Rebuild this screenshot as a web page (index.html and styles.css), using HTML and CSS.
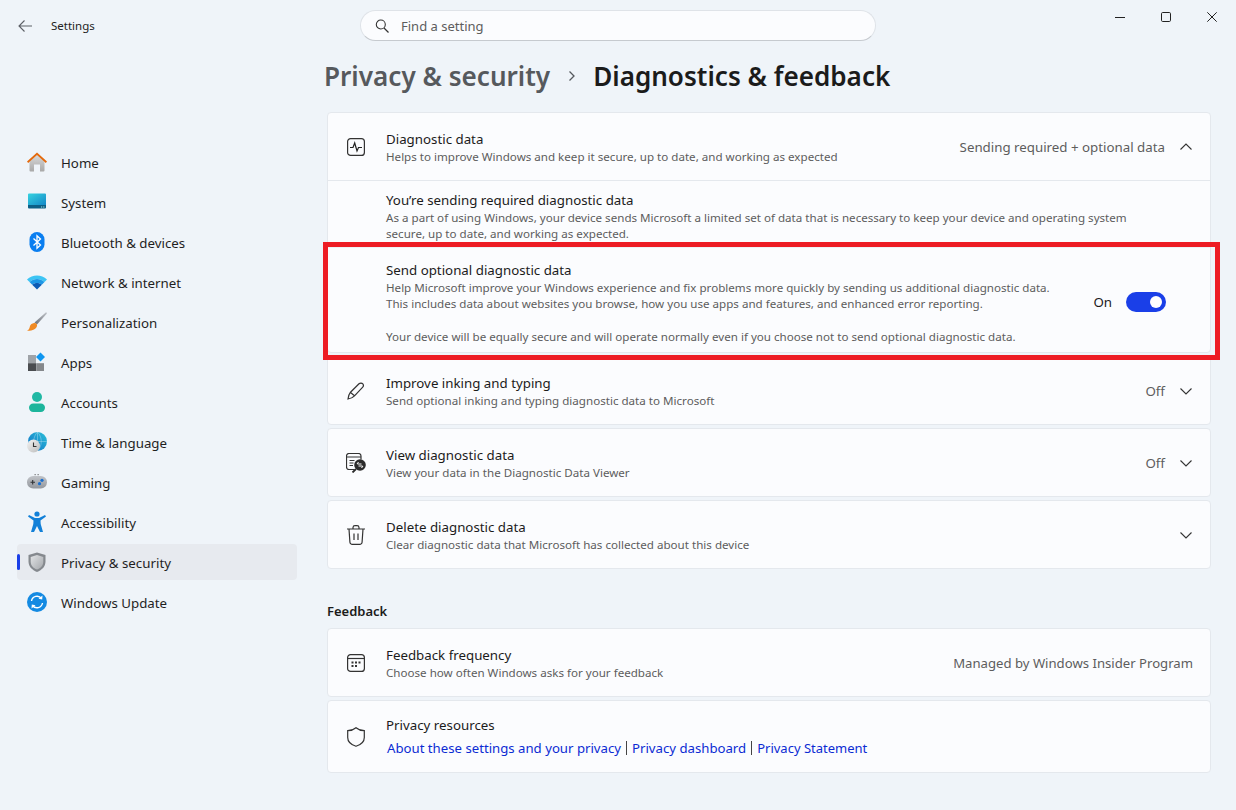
FILE: index.html
```html
<!DOCTYPE html>
<html lang="en">
<head>
<meta charset="utf-8">
<title>Settings</title>
<link rel="stylesheet" href="styles.css">
</head>
<body>
<div class="app">
  <header class="titlebar">
    <div class="tb-left">
      <svg class="back" width="16" height="16" viewBox="0 0 16 16"><path d="M15 8H2M7.500 2.500 2 8l5.500 5.500" fill="none" stroke="#5c6066" stroke-width="1.100"/></svg>
      <span class="app-name">Settings</span>
    </div>
    <div class="search">
      <svg width="16" height="16" viewBox="0 0 16 16"><circle cx="6.800" cy="6.500" r="4.500" fill="none" stroke="#333" stroke-width="1.100"/><path d="m10 10 4.500 4.500" stroke="#333" stroke-width="1.200"/></svg>
      <span>Find a setting</span>
    </div>
    <div class="controls">
      <svg width="10" height="10" viewBox="0 0 10 10"><path d="M0 5.500h10" stroke="#222" stroke-width="1"/></svg>
      <svg width="10" height="10" viewBox="0 0 10 10"><rect x=".5" y=".5" width="9" height="9" rx="1.200" fill="none" stroke="#222"/></svg>
      <svg width="10" height="10" viewBox="0 0 10 10"><path d="m.3.300 9.400 9.400M9.700.300.3 9.700" stroke="#222" stroke-width="1"/></svg>
    </div>
  </header>
  <div class="body">
    <nav class="nav">
      <a class="nav-item"><svg class="nav-icon" viewBox="0 0 22 22"><defs><linearGradient id="hw" x1="0" y1="0" x2="0" y2="1"><stop offset="0" stop-color="#dcdcdc"/><stop offset="1" stop-color="#a8a8a8"/></linearGradient></defs><path d="M3.500 10 11 3l7.500 7v9.500a1 1 0 0 1-1 1H14v-7H8v7H4.500a1 1 0 0 1-1-1z" fill="url(#hw)"/><path d="M1 10.500 11 1.500l10 9-1.200 1.400L11 4 2.200 11.900z" fill="#e4690c"/></svg><span>Home</span></a>
      <a class="nav-item"><svg class="nav-icon" viewBox="0 0 22 22"><defs><linearGradient id="sy" x1="0" y1="0" x2="1" y2="1"><stop offset="0" stop-color="#36d3e0"/><stop offset="1" stop-color="#1488c8"/></linearGradient></defs><path d="M2 3.500a1 1 0 0 1 1-1h16a1 1 0 0 1 1 1V14H2z" fill="url(#sy)"/><path d="M2 14h18v2.500a1 1 0 0 1-1 1H3a1 1 0 0 1-1-1z" fill="#0c5f86"/><path d="M15 16h1.200M17.200 16h1.200" stroke="#cfe" stroke-width=".8"/></svg><span>System</span></a>
      <a class="nav-item"><svg class="nav-icon" viewBox="0 0 22 22"><rect x="3.500" y="1" width="15" height="20" rx="7.500" fill="#0a7ef0"/><path d="m7.500 7.500 7 6.500-3.500 3.200V4.800L14.500 8l-7 6.500" fill="none" stroke="#fff" stroke-width="1.300"/></svg><span>Bluetooth &amp; devices</span></a>
      <a class="nav-item"><svg class="nav-icon" viewBox="0 0 22 22"><path d="M1 8.500C6.500 3 15.500 3 21 8.500l-2.500 2.500C14 7 8 7 3.500 11z" fill="#3cc4f4"/><path d="M3.500 11C8 7 14 7 18.500 11l-2.700 2.700C13 11.300 9 11.300 6.200 13.700z" fill="#1d97e6"/><path d="M6.200 13.700c2.800-2.400 6.800-2.400 9.600 0L11 18.500z" fill="#0c5bb5"/></svg><span>Network &amp; internet</span></a>
      <a class="nav-item"><svg class="nav-icon" viewBox="0 0 22 22"><defs><linearGradient id="br" x1="0" y1="1" x2="1" y2="0"><stop offset="0" stop-color="#6c7078"/><stop offset="1" stop-color="#bfc3c9"/></linearGradient></defs><path d="M20 1.200c.8.300 1 1 .7 1.600L11 13.500 8.500 11.500z" fill="url(#br)"/><path d="M8 12c2-.5 3.500 1 3 3-.7 3-4.500 5-10 4.800 2.500-1.500 2.500-3 3-4.800.4-1.500 2.200-2.600 4-3z" fill="#f08a24"/></svg><span>Personalization</span></a>
      <a class="nav-item"><svg class="nav-icon" viewBox="0 0 22 22"><rect x="2" y="4" width="8" height="8" fill="#9fa3a8"/><rect x="2" y="12.200" width="8" height="7.800" fill="#4a4c50"/><rect x="10.200" y="12.200" width="7.800" height="7.800" fill="#85888c"/><path d="m14.500 1.500 4.500 4.500-4.500 4.500L10 6z" fill="#0f96f0"/></svg><span>Apps</span></a>
      <a class="nav-item"><svg class="nav-icon" viewBox="0 0 22 22"><circle cx="11" cy="6" r="5" fill="#20b8a4"/><rect x="3" y="12.500" width="16" height="8.500" rx="4.200" fill="#1cb59c"/></svg><span>Accounts</span></a>
      <a class="nav-item"><svg class="nav-icon" viewBox="0 0 22 22"><defs><linearGradient id="gl" x1="1" y1="0" x2="0" y2="1"><stop offset="0" stop-color="#2bc0d8"/><stop offset="1" stop-color="#0f6fc6"/></linearGradient><linearGradient id="cl" x1="0" y1="0" x2="1" y2="1"><stop offset="0" stop-color="#f4f4f4"/><stop offset="1" stop-color="#bcbcbc"/></linearGradient></defs><circle cx="11.500" cy="10.500" r="9.500" fill="url(#gl)"/><path d="M11.500 1v19M2 10.500h19M11.500 1c-5 5-5 14 0 19M11.500 1c5 5 5 14 0 19" fill="none" stroke="#bfe6f5" stroke-width=".4"/><circle cx="7.500" cy="15" r="6.500" fill="url(#cl)"/><path d="M7.500 11.500v4h3" fill="none" stroke="#333" stroke-width="1.100"/></svg><span>Time &amp; language</span></a>
      <a class="nav-item"><svg class="nav-icon" viewBox="0 0 22 22"><defs><linearGradient id="gp" x1="0" y1="0" x2="0" y2="1"><stop offset="0" stop-color="#c0c3c8"/><stop offset="1" stop-color="#94989e"/></linearGradient></defs><rect x="1" y="5" width="20" height="12.500" rx="6.200" fill="url(#gp)"/><path d="M4.500 11.200h4.500M6.700 9v4.500" stroke="#2f3236" stroke-width="1.100"/><circle cx="16" cy="9.300" r="1.600" fill="#1a70d0"/><circle cx="13.500" cy="12.700" r="1.600" fill="#1a70d0"/><path d="M8.500 3.700h1.300M11.500 3.700h1.300" stroke="#555" stroke-width=".9"/></svg><span>Gaming</span></a>
      <a class="nav-item"><svg class="nav-icon" viewBox="0 0 22 22"><circle cx="11" cy="3" r="2.600" fill="#1280d8"/><path d="M2 5.500 3 4l6 3h4l6-3 1 1.500-5.500 4 .2 3.500L17 21h-3l-3-6-3 6H5l2.300-8 .2-3.500z" fill="#1280d8"/></svg><span>Accessibility</span></a>
      <a class="nav-item active"><svg class="nav-icon" viewBox="0 0 22 22"><defs><linearGradient id="sh" x1="0" y1="0" x2="1" y2="1"><stop offset="0" stop-color="#e2e4e6"/><stop offset="1" stop-color="#a4a7ab"/></linearGradient></defs><path d="M11 1.500 19.500 4v6.500c0 5-3.500 8.500-8.500 10.500-5-2-8.500-5.500-8.500-10.500V4z" fill="#85898e"/><path d="M11 4 17.300 6v4.700c0 3.800-2.500 6.300-6.300 7.900-3.800-1.600-6.300-4.100-6.300-7.900V6z" fill="url(#sh)"/></svg><span>Privacy &amp; security</span></a>
      <a class="nav-item"><svg class="nav-icon" viewBox="0 0 22 22"><circle cx="11" cy="11" r="10" fill="#148ae2"/><path d="M5.500 10a5.600 5.600 0 0 1 10-2.500M16.500 12a5.600 5.600 0 0 1-10 2.500" fill="none" stroke="#fff" stroke-width="1.400"/><path d="m16.500 4.500-.3 4-3.700-.7zM5.500 17.500l.3-4 3.700.7z" fill="#fff"/></svg><span>Windows Update</span></a>
    </nav>
    <main class="main">
      <h1 class="crumbs"><span class="crumb-parent">Privacy &amp; security</span><svg class="crumb-sep" width="10" height="12" viewBox="0 0 10 12"><path d="m2.500 1.500 4.500 4.500-4.500 4.500" fill="none" stroke="#55595e" stroke-width="1.300"/></svg><span>Diagnostics &amp; feedback</span></h1>

      <section class="card expanded">
        <div class="row head">
          <svg class="icon" viewBox="0 0 18 18"><rect x=".6" y=".6" width="16.800" height="16.800" rx="3" fill="none" stroke="#333" stroke-width="1.200"/><path d="M3 9.500h3l1.700-4.500 2.300 8 1.500-3.500h3.500" fill="none" stroke="#222" stroke-width="1.200"/></svg>
          <div class="text"><div class="t">Diagnostic data</div><div class="s">Helps to improve Windows and keep it secure, up to date, and working as expected</div></div>
          <span class="status">Sending required + optional data</span>
          <svg class="chev" viewBox="0 0 12 12"><path d="m.5 8.500 5.500-5.500 5.500 5.500" fill="none" stroke="#333" stroke-width="1.100"/></svg>
        </div>
        <div class="sub sub-required">
          <div class="t">You’re sending required diagnostic data</div>
          <div class="s">As a part of using Windows, your device sends Microsoft a limited set of data that is necessary to keep your device and operating system<br>secure, up to date, and working as expected.</div>
        </div>
        <div class="sub sub-optional">
          <div class="text">
            <div class="t">Send optional diagnostic data</div>
            <div class="s">Help Microsoft improve your Windows experience and fix problems more quickly by sending us additional diagnostic data.<br>This includes data about websites you browse, how you use apps and features, and enhanced error reporting.<br><br>Your device will be equally secure and will operate normally even if you choose not to send optional diagnostic data.</div>
          </div>
          <span class="on">On</span>
          <span class="toggle"><span class="knob"></span></span>
        </div>
      </section>

      <section class="card row collapsed">
        <svg class="icon" viewBox="0 0 18 18"><path d="M1 17c.5-3 1-5 2.500-6.800L12 1.800c1-1 3-1 3.800 0 .8 1 .7 2.500-.3 3.500L7.500 13.800C5.800 15.500 4 16.500 1 17zM3.500 10.500l4 3.300" fill="none" stroke="#333" stroke-width="1.200"/></svg>
        <div class="text"><div class="t">Improve inking and typing</div><div class="s">Send optional inking and typing diagnostic data to Microsoft</div></div>
        <span class="status">Off</span>
        <svg class="chev" viewBox="0 0 12 12"><path d="m.5 3.500 5.500 5.500 5.500-5.500" fill="none" stroke="#333" stroke-width="1.100"/></svg>
      </section>
      <section class="card row collapsed">
        <svg class="icon icon-wide" viewBox="0 0 20 20"><path d="M8.500 16.500H3a2.500 2.500 0 0 1-2.500-2.500V3A2.500 2.500 0 0 1 3 .5h9.500A2.500 2.500 0 0 1 15 3v3.500M.5 4h14.500M3.500 7.500h5M3.500 10h4M3.500 12.500h3.500" fill="none" stroke="#333" stroke-width="1.200"/><circle cx="14" cy="12" r="5.800" fill="#2b2b2b"/><path d="M11.500 11h4M16.500 13h-4M12.500 9 11 11M15.500 15l1.500-2" stroke="#fff" stroke-width="1" fill="none"/><path d="m10 16-3.500 3.500" stroke="#2b2b2b" stroke-width="1.800"/></svg>
        <div class="text"><div class="t">View diagnostic data</div><div class="s">View your data in the Diagnostic Data Viewer</div></div>
        <span class="status">Off</span>
        <svg class="chev" viewBox="0 0 12 12"><path d="m.5 3.500 5.500 5.500 5.500-5.500" fill="none" stroke="#333" stroke-width="1.100"/></svg>
      </section>
      <section class="card row collapsed">
        <svg class="icon icon-tall" viewBox="0 0 18 20"><path d="M0 4h18M6 4V2.500A2 2 0 0 1 8 .6h2a2 2 0 0 1 2 1.900V4M2 4l.9 13a2.400 2.400 0 0 0 2.400 2.400h7.400a2.400 2.400 0 0 0 2.400-2.400L16 4M7 8.500v6.500M11 8.500v6.500" fill="none" stroke="#333" stroke-width="1.200"/></svg>
        <div class="text"><div class="t">Delete diagnostic data</div><div class="s">Clear diagnostic data that Microsoft has collected about this device</div></div>
        <svg class="chev" viewBox="0 0 12 12"><path d="m.5 3.500 5.500 5.500 5.500-5.500" fill="none" stroke="#333" stroke-width="1.100"/></svg>
      </section>

      <h2 class="section-title">Feedback</h2>

      <section class="card row collapsed">
        <svg class="icon" viewBox="0 0 18 18"><rect x=".6" y=".6" width="16.800" height="16.800" rx="3" fill="none" stroke="#333" stroke-width="1.200"/><path d="M.6 4.500h16.800" stroke="#333" stroke-width="1.200"/><path d="M4.500 7.500h2v2h-2zM8 7.500h2v2H8zM11.500 7.500h2v2h-2zM4.500 11h2v2h-2zM8 11h2v2H8z" fill="#333"/></svg>
        <div class="text"><div class="t">Feedback frequency</div><div class="s">Choose how often Windows asks for your feedback</div></div>
        <span class="status managed">Managed by Windows Insider Program</span>
      </section>
      <section class="card row resources">
        <svg class="icon icon-tall" viewBox="0 0 18 20"><path d="M9 .7c2.200 1.900 4.700 2.900 8.300 3v6.800c0 4.200-3.200 7.200-8.300 8.800C3.900 17.700.7 14.700.7 10.500V3.700C4.300 3.600 6.800 2.600 9 .7z" fill="none" stroke="#333" stroke-width="1.200"/></svg>
        <div class="text">
          <div class="t">Privacy resources</div>
          <div class="links"><a>About these settings and your privacy</a><i></i><a>Privacy dashboard</a><i></i><a class="link-last">Privacy Statement</a></div>
        </div>
      </section>
    </main>
  </div>
  <div class="callout"></div>
</div>
</body>
</html>
```
FILE: styles.css
```css
* { box-sizing: border-box; }
html, body { margin: 0; padding: 0; }
body {
  width: 1236px;
  height: 810px;
  overflow: hidden;
  background: #eff4f9;
  font-family: "Noto Sans", "Open Sans", sans-serif;
  color: #1b1b1b;
}
.app { position: relative; width: 1236px; height: 810px; }

.titlebar { height: 52px; display: flex; align-items: flex-start; }
.tb-left { width: 360px; display: flex; align-items: center; padding: 17px 0 0 17px; }
.back { flex: none; }
.app-name { margin-left: 18px; font-size: 11.500px; line-height: 18px; color: #222; }
.search {
  width: 516px;
  height: 31px;
  margin-top: 10px;
  display: flex;
  align-items: center;
  gap: 11px;
  padding-left: 13px;
  background: #fbfcfe;
  border: 1px solid #dfe3e8;
  border-bottom-color: #c6cacf;
  border-radius: 16px;
  font-size: 13px;
  color: #5d5d5d;
}
.controls {
  flex: 1;
  display: flex;
  justify-content: flex-end;
  gap: 36px;
  padding: 12px 19px 0 0;
}

.body { display: flex; height: 758px; }
.nav { width: 310px; flex: none; padding: 92px 13px 0 17px; display: flex; flex-direction: column; gap: 4px; }
.nav-item {
  position: relative;
  height: 36px;
  display: flex;
  align-items: center;
  gap: 13px;
  padding-left: 9px;
  border-radius: 4px;
  font-size: 13.300px;
  color: #1f1f1f;
}
.nav-item span { padding-top: 2px; }
.nav-icon { width: 22px; height: 22px; flex: none; }
.nav-item.active { background: #e7eaef; }
.nav-item.active::before {
  content: "";
  position: absolute;
  left: 0;
  top: 10px;
  width: 3px;
  height: 16px;
  border-radius: 2px;
  background: #1a3fe8;
}

.main { width: 884px; margin-left: 17px; }
.crumbs {
  height: 47px;
  margin: 0 0 13px -3px;
  display: flex;
  align-items: center;
  font-size: 26.100px;
  font-weight: 600;
  color: #1b1b1b;
}
.crumb-parent { color: #56595d; }
.crumb-sep { margin: 0 16px 0 17px; }

.card {
  background: #fbfcfe;
  border: 1px solid #e4e8ed;
  border-radius: 4px;
  margin-bottom: 3px;
}
.row { display: flex; align-items: center; padding: 0 17px 0 19px; }
.row.head { height: 68px; border-bottom: 1px solid #e4e8ed; }
.collapsed { height: 69px; }
.resources { height: 73px; margin-bottom: 0; }
.icon { width: 18px; height: 18px; flex: none; margin-right: 21px; }
.icon-wide { width: 20px; height: 20px; margin-right: 20px; margin-left: -1px; }
.icon-tall { height: 20px; }
.text { flex: 1; min-width: 0; padding-top: 2px; }
.resources .text { padding-top: 0; }
.t { font-size: 13.300px; line-height: 19px; color: #1b1b1b; }
.s { font-size: 11.600px; line-height: 16.400px; color: #5d5d5d; }
.status { font-size: 13.300px; color: #5d5d5d; }
.status.managed { font-size: 13.150px; }
.chev { width: 12px; height: 12px; flex: none; margin: 0 1px 0 15px; }

.expanded { height: 241px; }
.sub { padding-left: 58px; }
.sub-required { height: 66px; padding-top: 10px; }
.sub-required .t { line-height: 18px; }
.sub-required .s { margin-top: 1px; }
.sub-optional {
  height: 104px;
  display: flex;
  align-items: center;
  padding-top: 5px;
  padding-right: 44px;
  border-top: 1px solid #eef1f5;
}
.on { font-size: 13.300px; margin-right: 14px; color: #1b1b1b; }
.toggle {
  width: 40px;
  height: 20px;
  border-radius: 10px;
  background: #1a3fe8;
  display: flex;
  align-items: center;
  justify-content: flex-end;
  padding-right: 4px;
}
.knob { width: 12px; height: 12px; border-radius: 50%; background: #fff; }

.section-title { margin: 0; height: 56px; padding-top: 30px; font-size: 13px; line-height: 18px; font-weight: 600; color: #1b1b1b; }

.links { display: flex; align-items: center; margin-top: 4px; padding-left: 1px; font-size: 13.200px; line-height: 18px; color: #0b2bd3; }
.links i { width: 1px; height: 14px; background: #444; margin: 0 5px; }
.link-last { font-size: 13px; }

.callout {
  position: absolute;
  left: 323px;
  top: 242px;
  width: 897px;
  height: 118px;
  border: 5px solid #ed1c24;
}
```
